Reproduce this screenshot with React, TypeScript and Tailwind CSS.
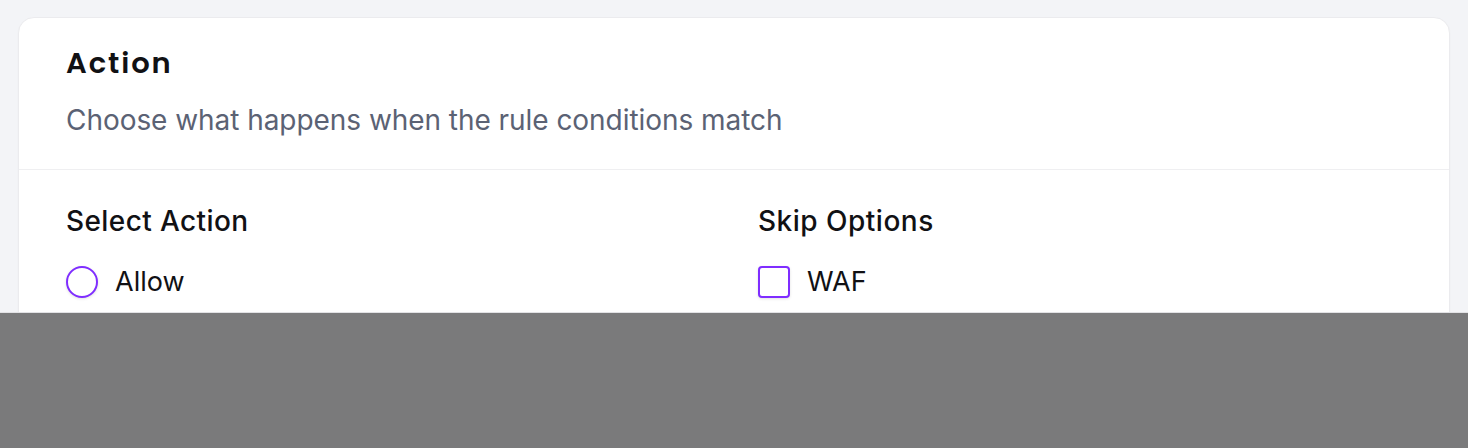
import React from 'react';

const App: React.FC = () => {
  return (
    <div className="h-[448px] w-full flex flex-col overflow-hidden bg-[#f3f4f7] font-['Inter','Noto_Sans',sans-serif]">
      <div className="h-[312px] overflow-hidden px-[18px] pt-[17px]">
        <div className="bg-white border border-[#ebebee] rounded-[16px] shadow-[0_1px_2px_rgba(0,0,0,0.03)]">
          {/* Header */}
          <div className="px-[47px] pt-[27px] pb-[31px] border-b border-[#efeff1]">
            <h2 className="text-[29px] leading-[36px] font-semibold text-[#111114] tracking-[1.9px] font-['Poppins','Inter',sans-serif]">
              Action
            </h2>
            <p className="mt-[21px] text-[28px] leading-[36px] tracking-[-0.05px] text-[#5b6274]">
              Choose what happens when the rule conditions match
            </p>
          </div>

          {/* Body */}
          <div className="px-[47px] pt-[33px] pb-8 grid grid-cols-2 gap-x-12">
            <div className="flex flex-col">
              <span className="text-[28px] leading-[36px] font-medium tracking-[0.4px] text-[#111114]">Select Action</span>
              <label className="mt-[25px] flex items-center gap-[17px] cursor-pointer">
                <span className="w-[32px] h-[32px] rounded-full border-2 border-[#7f2dff] bg-white shadow-[0_1px_3px_rgba(0,0,0,0.12)] shrink-0" />
                <span className="text-[27px] leading-[36px] text-[#111114]">Allow</span>
              </label>
            </div>
            <div className="flex flex-col">
              <span className="text-[28px] leading-[36px] font-medium tracking-[0.5px] text-[#111114]">Skip Options</span>
              <label className="mt-[25px] flex items-center gap-[17px] cursor-pointer">
                <span className="w-[32px] h-[32px] rounded-[4px] border-2 border-[#7f2dff] bg-white shadow-[0_1px_3px_rgba(0,0,0,0.12)] shrink-0" />
                <span className="text-[27px] leading-[36px] text-[#111114]">WAF</span>
              </label>
            </div>
          </div>
        </div>
      </div>
      <div className="h-px bg-[#e2e2e5]" />
      <div className="flex-1 bg-[#7a7a7b]" />
    </div>
  );
};

export default App;
